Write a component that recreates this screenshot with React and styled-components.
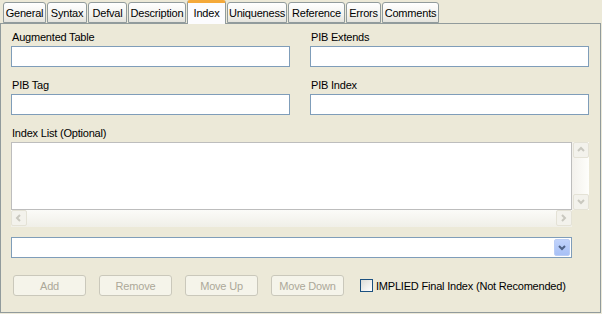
import * as React from "react";
import styled, { createGlobalStyle } from "styled-components";

const Global = createGlobalStyle`
  html, body { margin: 0; padding: 0; background: #ece9d8; }
  body {
    font-family: "Liberation Sans", Arial, sans-serif;
    font-size: 11px;
    letter-spacing: -0.2px;
    color: #000;
  }
`;

const Window = styled.div`
  width: 602px;
  height: 314px;
  background: #ece9d8;
  display: flex;
  flex-direction: column;
  overflow: hidden;
`;

const TabStrip = styled.div`
  display: flex;
  align-items: flex-end;
  height: 23px;
  padding-left: 3px;
  position: relative;
  z-index: 1;
`;

const Tab = styled.div`
  box-sizing: border-box;
  width: ${(p) => p.$w}px;
  height: ${(p) => (p.$active ? 24 : 21)}px;
  margin-bottom: ${(p) => (p.$active ? -1 : 0)}px;
  margin-right: 1px;
  padding-top: ${(p) => (p.$active ? 3 : 3)}px;
  border: 1px solid #919b9c;
  border-bottom: ${(p) => (p.$active ? "none" : "1px solid #919b9c")};
  border-top: ${(p) => (p.$active ? "3px solid #f4a93a" : "1px solid #919b9c")};
  border-radius: 3px 3px 0 0;
  background: ${(p) =>
    p.$active ? "#fcfcfe" : "linear-gradient(#ffffff, #f3f3ef 60%, #e4e3dc)"};
  line-height: 14px;
  text-align: center;
  white-space: nowrap;
`;

const Panel = styled.div`
  box-sizing: border-box;
  flex: 1;
  width: 601px;
  margin-bottom: 1px;
  border: 1px solid #919b9c;
  padding: 6px 11px 0 10px;
  display: flex;
  flex-direction: column;
`;

const FieldGrid = styled.div`
  display: grid;
  grid-template-columns: 279px 279px;
  column-gap: 20px;
  row-gap: 11px;
`;

const Field = styled.div`
  display: flex;
  flex-direction: column;
`;

const Label = styled.label`
  height: 14px;
  line-height: 14px;
  padding-left: 1px;
  margin-bottom: 2px;
`;

const TextBox = styled.div`
  box-sizing: border-box;
  height: 21px;
  border: 1px solid #7f9db9;
  background: #fff;
`;

const ListLabel = styled(Label)`
  margin-top: 11px;
  margin-bottom: 2px;
`;

const ListArea = styled.div`
  display: grid;
  grid-template-columns: 561px 17px;
  grid-template-rows: 68px 17px;
`;

const ListBox = styled.div`
  box-sizing: border-box;
  border: 1px solid #bdbdbd;
  background: #fff;
`;

const VScroll = styled.div`
  display: flex;
  flex-direction: column;
  justify-content: space-between;
  align-items: flex-end;
  background: linear-gradient(90deg, #f3f1ec, #fefefb);
`;

const HScroll = styled.div`
  display: flex;
  justify-content: space-between;
  background: linear-gradient(#fbfbf8, #f0efe8);
`;

const ScrollBtn = styled.div`
  box-sizing: border-box;
  width: 16px;
  height: 16px;
  border: 1px solid #e4e2d6;
  border-radius: 2px;
  background: #f3f2ec;
  display: flex;
  align-items: center;
  justify-content: center;
`;

const Combo = styled.div`
  box-sizing: border-box;
  width: 561px;
  height: 21px;
  margin-top: 10px;
  border: 1px solid #7f9db9;
  background: #fff;
  display: flex;
  justify-content: flex-end;
  padding: 1px;
`;

const DropBtn = styled.div`
  box-sizing: border-box;
  width: 16px;
  height: 17px;
  border: 1px solid #bacdf6;
  border-radius: 2px;
  background: linear-gradient(#c1d3fb, #a7c0f6);
  display: flex;
  align-items: center;
  justify-content: center;
`;

const ButtonRow = styled.div`
  display: flex;
  align-items: center;
  margin-top: 17px;
  padding-left: 2px;
`;

const Button = styled.div`
  box-sizing: border-box;
  width: 73px;
  height: 21px;
  margin-right: 13px;
  border: 1px solid #cac8bb;
  border-radius: 3px;
  background: #f5f4ea;
  color: #aca899;
  display: flex;
  align-items: center;
  justify-content: center;
`;

const CheckRow = styled.label`
  display: flex;
  align-items: center;
  margin-left: 3px;
`;

const Box = styled.span`
  box-sizing: border-box;
  width: 13px;
  height: 13px;
  border: 1px solid #1c5180;
  background: linear-gradient(135deg, #dcdcd7, #fff);
  margin-right: 3px;
`;

const Arrow = ({ dir, color = "#c9c8bf" }) => {
  const paths = {
    up: "M1 5 L4 2 L7 5",
    down: "M1 2 L4 5 L7 2",
    left: "M5 1 L2 4 L5 7",
    right: "M2 1 L5 4 L2 7",
  };
  return (
    <svg width="8" height="8" viewBox="0 0 8 8">
      <path d={paths[dir]} fill="none" stroke={color} strokeWidth="2" />
    </svg>
  );
};

const tabs = [
  ["General", 43],
  ["Syntax", 40],
  ["Defval", 39],
  ["Description", 58],
  ["Index", 39],
  ["Uniqueness", 60],
  ["Reference", 57],
  ["Errors", 35],
  ["Comments", 57],
];

const fields = ["Augmented Table", "PIB Extends", "PIB Tag", "PIB Index"];

export default function App() {
  return (
    <Window>
      <Global />
      <TabStrip>
        {tabs.map(([t, w]) => (
          <Tab key={t} $w={w} $active={t === "Index"}>
            {t}
          </Tab>
        ))}
      </TabStrip>
      <Panel>
        <FieldGrid>
          {fields.map((f) => (
            <Field key={f}>
              <Label>{f}</Label>
              <TextBox />
            </Field>
          ))}
        </FieldGrid>
        <ListLabel>Index List (Optional)</ListLabel>
        <ListArea>
          <ListBox />
          <VScroll>
            <ScrollBtn>
              <Arrow dir="up" />
            </ScrollBtn>
            <ScrollBtn>
              <Arrow dir="down" />
            </ScrollBtn>
          </VScroll>
          <HScroll>
            <ScrollBtn>
              <Arrow dir="left" />
            </ScrollBtn>
            <ScrollBtn>
              <Arrow dir="right" />
            </ScrollBtn>
          </HScroll>
        </ListArea>
        <Combo>
          <DropBtn>
            <Arrow dir="down" color="#4d6185" />
          </DropBtn>
        </Combo>
        <ButtonRow>
          <Button>Add</Button>
          <Button>Remove</Button>
          <Button>Move Up</Button>
          <Button>Move Down</Button>
          <CheckRow>
            <Box />
            IMPLIED Final Index (Not Recomended)
          </CheckRow>
        </ButtonRow>
      </Panel>
    </Window>
  );
}
